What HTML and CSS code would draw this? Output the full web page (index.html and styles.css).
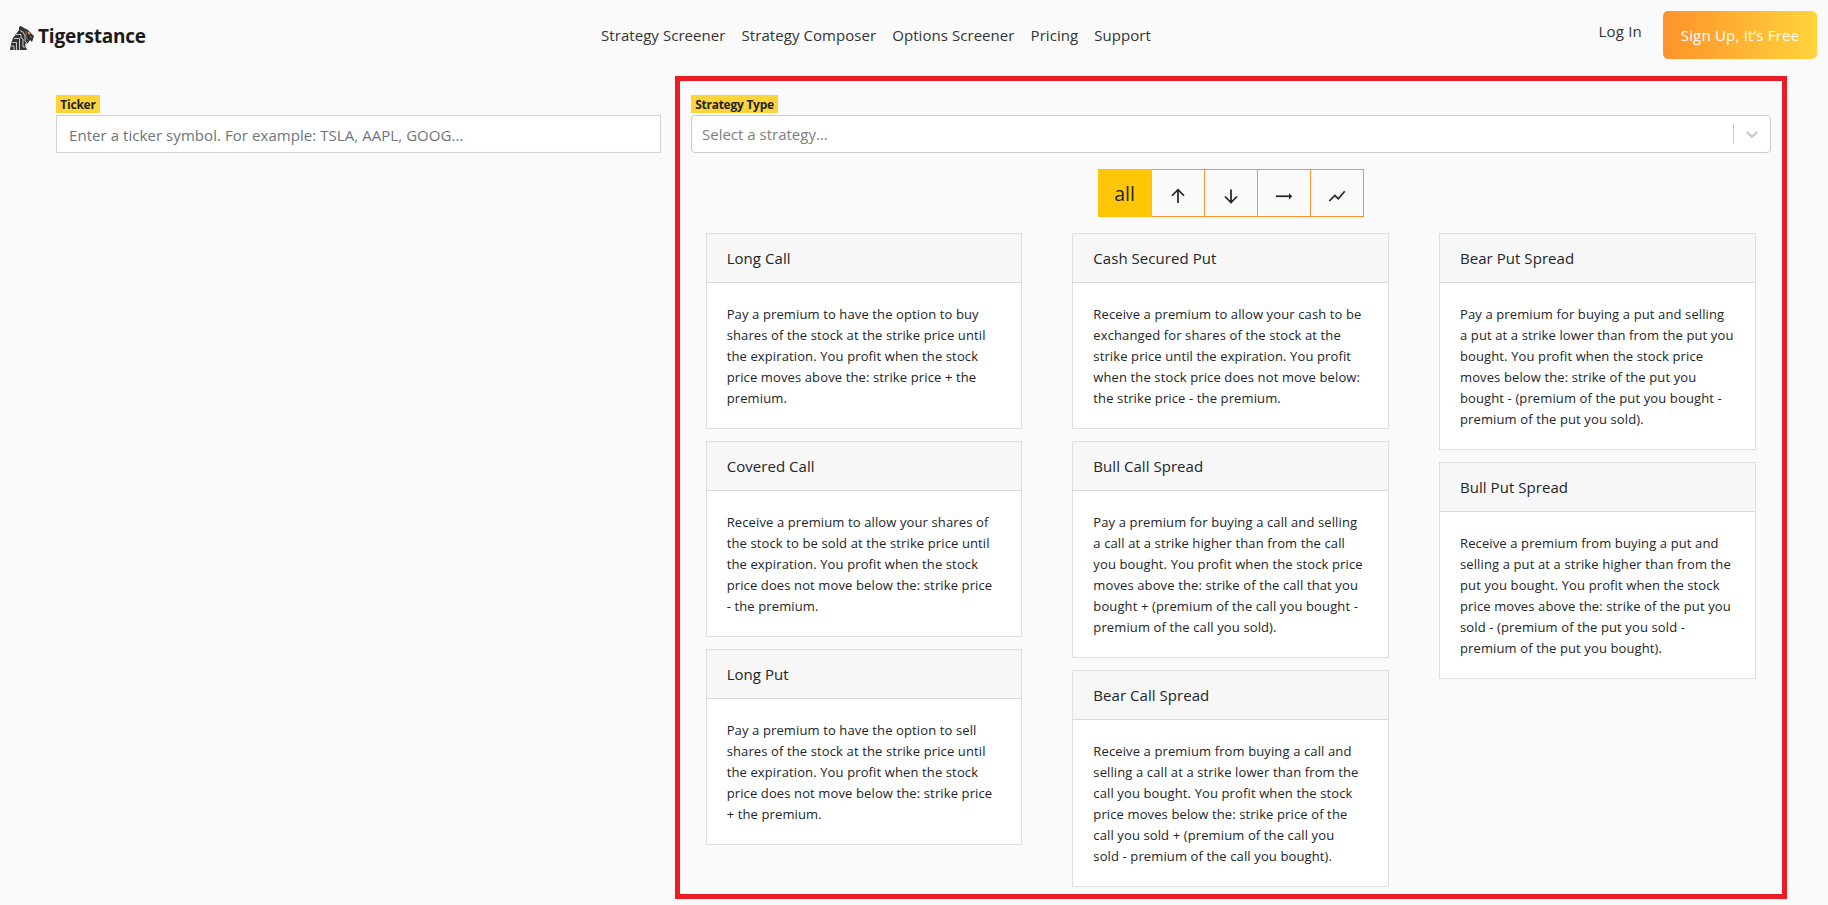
FILE: index.html
```html
<!DOCTYPE html>
<html lang="en">
<head>
<meta charset="utf-8">
<title>Tigerstance</title>
<link rel="stylesheet" href="styles.css">
</head>
<body>
<header class="topbar">
  <a class="brand">
    <svg class="logo" viewBox="0 0 24 24" width="24" height="24">
      <path fill="#333" d="M0 24L1 18L3 12L6 8L9 4V1L11 0L14 2L18 4L21 7L24 10L22 16L20 14L18 17L15 18L17 24Z"/>
      <path fill="none" stroke="#ededed" stroke-width=".8" d="M10 4.500L13 6L15 10V15L17 17M6 8.500H11V12L13 13V21H17M4 12.500H9.500V24M2.500 16.500H6.500V24M1 20H4V24"/>
      <path fill="none" stroke="#999" stroke-width=".7" d="M16 5V12L18 14M20 10L22 12"/>
      <path fill="#f0922e" d="M17.300 5.500L20.500 6.800L20 8.800L18.200 8Z"/>
    </svg>
    <span class="brand-name">Tigerstance</span>
  </a>
  <nav class="nav">
    <a>Strategy Screener</a>
    <a>Strategy Composer</a>
    <a>Options Screener</a>
    <a>Pricing</a>
    <a>Support</a>
  </nav>
  <div class="account">
    <a class="login">Log In</a>
    <a class="signup">Sign Up, It’s Free</a>
  </div>
</header>
<main class="main">
  <section class="ticker">
    <label class="tag tag-ticker">Ticker</label>
    <div class="input">Enter a ticker symbol. For example: TSLA, AAPL, GOOG...</div>
  </section>
  <section class="strategy">
    <div class="field">
      <label class="tag tag-strategy">Strategy Type</label>
      <div class="select">
        <span class="placeholder">Select a strategy...</span>
        <span class="separator"></span>
        <svg class="chevron" viewBox="0 0 20 20" width="20" height="20"><path fill="#ccc" d="M4.516 7.548c0.436-0.446 1.043-0.481 1.576 0l3.908 3.747 3.908-3.747c0.533-0.481 1.141-0.446 1.574 0 0.436 0.445 0.408 1.197 0 1.615-0.406 0.418-4.695 4.502-4.695 4.502-0.217 0.223-0.502 0.335-0.787 0.335s-0.570-0.112-0.789-0.335c0 0-4.287-4.084-4.695-4.502s-0.436-1.170 0-1.615z"/></svg>
      </div>
    </div>
    <div class="filters">
      <button class="filter active">all</button>
      <button class="filter"><svg viewBox="0 0 16 16" width="20" height="20"><path d="M8 3.200V13.500M3.200 7.800L8 3L12.800 7.800"/></svg></button>
      <button class="filter"><svg viewBox="0 0 16 16" width="20" height="20"><path d="M8 2.800V13M3.200 8.400L8 13.200L12.800 8.400"/></svg></button>
      <button class="filter"><svg viewBox="0 0 16 16" width="20" height="20"><path d="M1.500 8.200H13"/><path class="solid" d="M12 5.500L14.500 8.200L12 10.900Z"/></svg></button>
      <button class="filter"><svg viewBox="0 0 16 16" width="20" height="20"><path d="M1.800 12L6.300 7.500L9 10.200L14.200 4.200"/></svg></button>
    </div>
    <div class="columns">
      <div class="column">
        <article class="card"><h2>Long Call</h2><p>Pay a premium to have the option to buy<br>shares of the stock at the strike price until<br>the expiration. You profit when the stock<br>price moves above the: strike price + the<br>premium.</p></article>
        <article class="card"><h2>Covered Call</h2><p>Receive a premium to allow your shares of<br>the stock to be sold at the strike price until<br>the expiration. You profit when the stock<br>price does not move below the: strike price<br>- the premium.</p></article>
        <article class="card"><h2>Long Put</h2><p>Pay a premium to have the option to sell<br>shares of the stock at the strike price until<br>the expiration. You profit when the stock<br>price does not move below the: strike price<br>+ the premium.</p></article>
      </div>
      <div class="column">
        <article class="card"><h2>Cash Secured Put</h2><p>Receive a premium to allow your cash to be<br>exchanged for shares of the stock at the<br>strike price until the expiration. You profit<br>when the stock price does not move below:<br>the strike price - the premium.</p></article>
        <article class="card"><h2>Bull Call Spread</h2><p>Pay a premium for buying a call and selling<br>a call at a strike higher than from the call<br>you bought. You profit when the stock price<br>moves above the: strike of the call that you<br>bought + (premium of the call you bought -<br>premium of the call you sold).</p></article>
        <article class="card"><h2>Bear Call Spread</h2><p>Receive a premium from buying a call and<br>selling a call at a strike lower than from the<br>call you bought. You profit when the stock<br>price moves below the: strike price of the<br>call you sold + (premium of the call you<br>sold - premium of the call you bought).</p></article>
      </div>
      <div class="column">
        <article class="card"><h2>Bear Put Spread</h2><p>Pay a premium for buying a put and selling<br>a put at a strike lower than from the put you<br>bought. You profit when the stock price<br>moves below the: strike of the put you<br>bought - (premium of the put you bought -<br>premium of the put you sold).</p></article>
        <article class="card"><h2>Bull Put Spread</h2><p>Receive a premium from buying a put and<br>selling a put at a strike higher than from the<br>put you bought. You profit when the stock<br>price moves above the: strike of the put you<br>sold - (premium of the put you sold -<br>premium of the put you bought).</p></article>
      </div>
    </div>
  </section>
</main>
</body>
</html>
```
FILE: styles.css
```css
* { box-sizing: border-box; }
body {
  margin: 0;
  height: 905px;
  overflow: hidden;
  background: #fafafa;
  color: #212529;
  font-family: "Open Sans", "Noto Sans", sans-serif;
  font-size: 15px;
  white-space: nowrap;
}
.topbar {
  display: grid;
  grid-template-columns: 601px 1fr auto;
  height: 76px;
  padding-right: 11px;
}
.brand { display: flex; align-items: flex-start; padding: 26px 0 0 10px; }
.logo { display: block; }
.brand-name {
  margin: -3px 0 0 4px;
  font-size: 19px;
  line-height: 26px;
  font-weight: 700;
  color: #1a1a1a;
  letter-spacing: -0.2px;
}
.nav { display: flex; gap: 16px; padding-top: 23px; line-height: 24px; color: #333; letter-spacing: 0.06px; }
.account { display: flex; align-items: flex-start; padding-top: 11px; }
.login { margin: 8px 21px 0 0; line-height: 24px; color: #333; letter-spacing: 0.2px; }
.signup {
  width: 154px;
  height: 48px;
  border-radius: 5px;
  background: linear-gradient(90deg, #ff922b, #ffd43b);
  color: #fff;
  line-height: 49px;
  text-align: center;
  letter-spacing: 0.2px;
}
.main { display: flex; align-items: flex-start; }
.ticker { width: 605px; margin: 19px 14px 0 56px; }
.tag {
  display: block;
  height: 18px;
  margin-bottom: 2px;
  background: #ffd43b;
  font-size: 12px;
  line-height: 20px;
  font-weight: 700;
  text-align: center;
  letter-spacing: -0.25px;
}
.tag-ticker { width: 44px; }
.tag-strategy { width: 87px; }
.input {
  height: 38px;
  padding-left: 12px;
  border: 1px solid #ced4da;
  background: #fff;
  color: #6c757d;
  line-height: 38px;
  letter-spacing: 0.06px;
}
.strategy { width: 1112px; height: 823px; border: 5px solid #ed1c24; }
.field { width: 1080px; margin: 14px 0 0 11px; }
.select {
  display: flex;
  align-items: center;
  height: 38px;
  padding: 0 8px 0 10px;
  border: 1px solid #ccc;
  border-radius: 4px;
  background: #fff;
}
.placeholder { flex: 1; color: #808080; line-height: 36px; }
.separator { width: 1px; height: 20px; background: #ccc; }
.chevron { margin-left: 8px; }
.filters { display: flex; width: 266px; margin: 16px 0 16px 418px; }
.filter {
  display: flex;
  align-items: center;
  justify-content: center;
  width: 53px;
  height: 48px;
  padding: 5px 0 0;
  border: solid #fd922f;
  border-width: 1px 1px 1px 0;
  background: transparent;
  color: #212529;
  font: 19.500px/28px "Open Sans", sans-serif;
}
.filter svg { display: block; fill: none; stroke: #212529; stroke-width: 1.4; }
.filter .solid { fill: #212529; stroke: none; }
.filter.active { width: 54px; padding: 1px 0 0; border-color: #ffc107; background: #ffc708; }
.columns {
  display: grid;
  grid-template-columns: repeat(3, 1fr);
  gap: 50px;
  width: 1050px;
  margin-left: 25.67px;
}
.column { display: flex; flex-direction: column; gap: 12px; }
.card { border: 1px solid #dfdfdf; background: #fff; }
.card h2 {
  height: 49px;
  margin: 0;
  padding-left: 20px;
  border-bottom: 1px solid #dadada;
  background: #f7f7f7;
  font-size: 15px;
  font-weight: 400;
  line-height: 49px;
  letter-spacing: 0.05px;
}
.card p { margin: 0; padding: 21px 20px 19px; font-size: 13px; line-height: 21px; letter-spacing: 0.12px; }
```
